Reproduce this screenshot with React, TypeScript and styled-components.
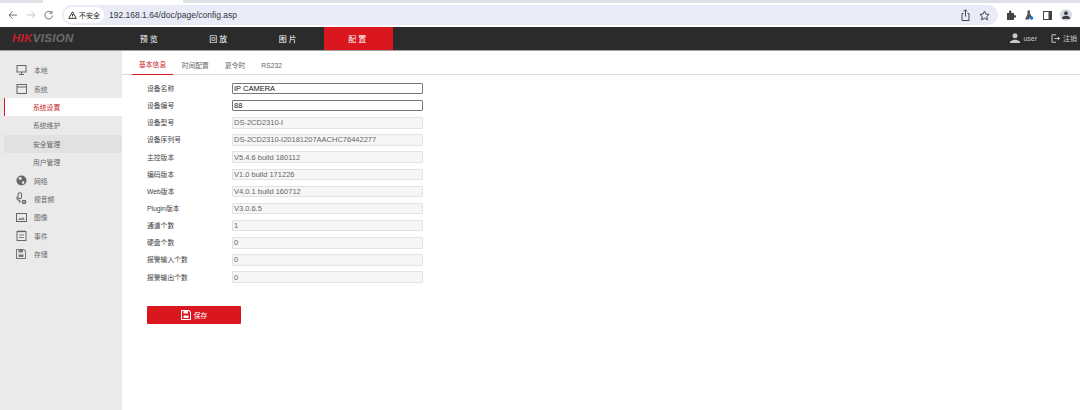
import React from "react";
import styled, { createGlobalStyle } from "styled-components";

const FONT = `"Liberation Sans", "Noto Sans CJK SC", sans-serif`;

const GlobalStyle = createGlobalStyle`
  html, body {
    margin: 0;
    padding: 0;
    background: #ffffff;
    font-family: ${FONT};
  }
  * {
    box-sizing: border-box;
  }
`;

const navItems = ["预览", "回放", "图片", "配置"];
const tabs = ["基本信息", "时间配置", "夏令时", "RS232"];

const fields = [
  { label: "设备名称", value: "IP CAMERA", editable: true },
  { label: "设备编号", value: "88", editable: true },
  { label: "设备型号", value: "DS-2CD2310-I" },
  { label: "设备序列号", value: "DS-2CD2310-I20181207AACHC76442277" },
  { label: "主控版本", value: "V5.4.6 build 180112" },
  { label: "编码版本", value: "V1.0 build 171226" },
  { label: "Web版本", value: "V4.0.1 build 160712" },
  { label: "Plugin版本", value: "V3.0.6.5" },
  { label: "通道个数", value: "1" },
  { label: "硬盘个数", value: "0" },
  { label: "报警输入个数", value: "0" },
  { label: "报警输出个数", value: "0" },
];

const MonitorIcon = () => (
  <svg width="11" height="10" viewBox="0 0 11 10" fill="none" stroke="#666" strokeWidth="1">
    <rect x="1" y="0.5" width="9" height="6.5" />
    <path d="M5.5 7v2M3 9.500h5" />
  </svg>
);
const WindowIcon = () => (
  <svg width="11" height="10" viewBox="0 0 11 10" fill="none" stroke="#666" strokeWidth="1">
    <rect x="1" y="0.5" width="9.500" height="9" />
    <path d="M1 3h9.500" />
  </svg>
);
const GlobeIcon = () => (
  <svg width="11" height="11" viewBox="0 0 11 11">
    <circle cx="5.5" cy="5.5" r="5" fill="#666" />
    <path d="M2.500 2.500l2.500-.5 1 1.500-1.500 1.500-1.500-.5zM6 6l2.500.5-.5 2-1.500 1z" fill="#eaeaea" />
  </svg>
);
const AvIcon = () => (
  <svg width="11" height="13" viewBox="0 0 11 13" fill="none" stroke="#666" strokeWidth="1.1">
    <rect x="2" y="0.8" width="3.5" height="6" rx="1.7" />
    <path d="M0.8 5c0 2.500 1.500 3.500 3 3.500V11" />
    <circle cx="8" cy="10" r="1.600" strokeWidth="1.500" />
  </svg>
);
const ImageIcon = () => (
  <svg width="11" height="9" viewBox="0 0 11 9" fill="none" stroke="#666" strokeWidth="1">
    <rect x="0.5" y="0.5" width="10" height="8" />
    <path d="M2 7l2-2.500 1.200 1.200L7 4l2 3z" fill="#888" stroke="none" />
  </svg>
);
const CalendarIcon = () => (
  <svg width="11" height="11" viewBox="0 0 11 11" fill="none" stroke="#666" strokeWidth="1">
    <rect x="1" y="1.500" width="9" height="9" />
    <path d="M3 0v2.500M5.500 0v2.500M8 0v2.500M3 5h5M3 7.500h5" strokeWidth="0.8" />
  </svg>
);
const DiskIcon = ({ color = "#777" }: { color?: string }) => (
  <svg width="10" height="10" viewBox="0 0 10 10">
    <path
      fillRule="evenodd"
      d="M0 0h8l2 2v8H0zM1 1v8h8V2.400L7.600 1H7v2.500H2.500V1zM2.500 5.500h5V8h-5z"
      fill={color}
    />
  </svg>
);

const sideItems: { label: string; icon?: React.ReactNode; kind?: "active" | "hover" }[] = [
  { label: "本地", icon: <MonitorIcon /> },
  { label: "系统", icon: <WindowIcon /> },
  { label: "系统设置", kind: "active" },
  { label: "系统维护" },
  { label: "安全管理", kind: "hover" },
  { label: "用户管理" },
  { label: "网络", icon: <GlobeIcon /> },
  { label: "视音频", icon: <AvIcon /> },
  { label: "图像", icon: <ImageIcon /> },
  { label: "事件", icon: <CalendarIcon /> },
  { label: "存储", icon: <DiskIcon /> },
];

export default function App() {
  return (
    <>
      <GlobalStyle />
      <Page>
        <TabStrip>
          <StripTab />
        </TabStrip>
        <Toolbar>
          <svg width="46" height="10" viewBox="0 0 46 10" fill="none" stroke="#6b6e73" strokeWidth="1">
            <path d="M9 5H1M4.500 1.500 1 5l3.500 3.500" />
            <path d="M19 5h8M23.500 1.500 27 5l-3.500 3.500" stroke="#c4c6ca" />
            <path d="M44.500 5.500a3.800 3.800 0 1 1-1.100-3M44 .8v2.500h-2.500" />
          </svg>
          <AddressBar>
            <SecurityChip>
              <svg width="9" height="8" viewBox="0 0 9 8" fill="none" stroke="#222" strokeWidth="0.9">
                <path d="M4.500.8.700 7.400h7.600z" />
                <path d="M4.500 3v2.200M4.500 5.700v.7" />
              </svg>
              不安全
            </SecurityChip>
            <Url>192.168.1.64/doc/page/config.asp</Url>
            <AddressIcons>
              <svg width="9" height="12" viewBox="0 0 9 12" fill="none" stroke="#444" strokeWidth="1">
                <path d="M2.500 4.500H1v7h7v-7H6.500M4.500 7.500V.8M2.800 2.500 4.500.8l1.700 1.700" />
              </svg>
              <svg width="11" height="11" viewBox="0 0 11 11" fill="none" stroke="#444" strokeWidth="1">
                <path d="M5.500 1 6.900 4l3.200.4-2.300 2.200.6 3.200-2.900-1.600-2.900 1.600.6-3.200L.9 4.400 4.100 4z" />
              </svg>
            </AddressIcons>
          </AddressBar>
          <ToolbarIcons>
            <svg width="10" height="10" viewBox="0 0 10 10">
              <path d="M1 3h2V1.800a1.200 1.200 0 0 1 2.400 0V3h2.600v2.200h1a1.200 1.200 0 0 1 0 2.400H8V10H1z" fill="#444" />
            </svg>
            <svg width="10" height="10" viewBox="0 0 10 10">
              <path d="M3.500.5h2.500v3l2 3.500H6l-1 2.500H1L3.500 4z" fill="#555" />
              <circle cx="7.500" cy="8" r="1.800" fill="#1a73e8" />
            </svg>
            <svg width="9" height="9" viewBox="0 0 9 9">
              <path fillRule="evenodd" d="M0 0h9v9H0zM1 1v7h4.500V1z" fill="#444" />
            </svg>
            <Avatar>
              <svg width="8" height="8" viewBox="0 0 8 8">
                <circle cx="4" cy="2.200" r="1.900" fill="#3c4043" />
                <path d="M0 8c0-2.500 1.500-3.200 4-3.200S8 5.500 8 8z" fill="#3c4043" />
              </svg>
            </Avatar>
          </ToolbarIcons>
        </Toolbar>
        <Header>
          <Logo>
            <LogoRed>HIK</LogoRed>VISION
          </Logo>
          <Nav>
            {navItems.map((item, i) => (
              <NavItem key={item} $active={i === 3}>
                {item}
              </NavItem>
            ))}
          </Nav>
          <UserArea>
            <svg width="10" height="10" viewBox="0 0 10 10">
              <circle cx="5" cy="2.800" r="2.500" fill="#c8c8c8" />
              <path d="M0 10V8.600l3.500-1.800h3L10 8.600V10z" fill="#c8c8c8" />
            </svg>
            <UserName>user</UserName>
            <svg width="9" height="9" viewBox="0 0 9 9" fill="none" stroke="#c8c8c8" strokeWidth="1">
              <path d="M5 .8H1v7.400h4M3.500 4.500h5M6.800 3l1.700 1.500L6.800 6" />
            </svg>
            <Logout>注销</Logout>
          </UserArea>
        </Header>
        <Body>
          <Sidebar>
            {sideItems.map((item) =>
              item.icon ? (
                <SideRow key={item.label}>
                  <SideIcon>{item.icon}</SideIcon>
                  {item.label}
                </SideRow>
              ) : (
                <SubRow key={item.label} $kind={item.kind}>
                  {item.label}
                </SubRow>
              )
            )}
          </Sidebar>
          <Main>
            <Tabs>
              {tabs.map((tab, i) => (
                <Tab key={tab} $active={i === 0}>
                  {tab}
                </Tab>
              ))}
            </Tabs>
            <Form>
              {fields.map((field) => (
                <Row key={field.label}>
                  <Label>{field.label}</Label>
                  <Value $editable={field.editable}>{field.value}</Value>
                </Row>
              ))}
            </Form>
            <SaveButton>
              <DiskIcon color="#ffffff" />
              保存
            </SaveButton>
          </Main>
        </Body>
      </Page>
    </>
  );
}

const Page = styled.div`
  width: 1080px;
  height: 410px;
  display: flex;
  flex-direction: column;
  overflow: hidden;
`;

const TabStrip = styled.div`
  height: 3px;
  background: #dee1e6;
`;

const StripTab = styled.div`
  width: 140px;
  height: 3px;
  margin-left: 43px;
  background: #ffffff;
`;

const Toolbar = styled.div`
  height: 24px;
  display: flex;
  align-items: center;
  padding: 0 8px 0 8px;
  background: #ffffff;
`;

const AddressBar = styled.div`
  width: 936px;
  height: 20px;
  margin-left: 8px;
  display: flex;
  align-items: center;
  padding: 0 8px 0 2px;
  border-radius: 10px;
  background: #e9ecf6;
`;

const SecurityChip = styled.div`
  height: 16px;
  display: flex;
  align-items: center;
  gap: 2px;
  padding: 0 4px;
  border-radius: 8px;
  background: #ffffff;
  font-size: 7px;
  color: #222222;
`;

const Url = styled.span`
  margin-left: 5px;
  font-size: 8.500px;
  color: #33363b;
`;

const AddressIcons = styled.div`
  margin-left: auto;
  display: flex;
  align-items: center;
  gap: 9px;
`;

const ToolbarIcons = styled.div`
  margin-left: 8px;
  display: flex;
  align-items: center;
  gap: 8.500px;
`;

const Avatar = styled.div`
  width: 12px;
  height: 12px;
  display: flex;
  align-items: center;
  justify-content: center;
  border-radius: 50%;
  background: #d5d9e3;
`;

const Header = styled.div`
  height: 23.500px;
  display: flex;
  align-items: stretch;
  background: #2b2b2b;
  border-bottom: 1px solid #a0a0a0;
`;

const Logo = styled.div`
  width: 115px;
  padding-left: 12px;
  display: flex;
  align-items: center;
  font-size: 11.500px;
  font-weight: 700;
  font-style: italic;
  letter-spacing: 0.300px;
  color: #6d6d6d;
`;

const LogoRed = styled.span`
  color: #c8202a;
`;

const Nav = styled.div`
  display: flex;
`;

const NavItem = styled.div<{ $active?: boolean }>`
  width: 69.500px;
  display: flex;
  align-items: center;
  justify-content: center;
  letter-spacing: 2px;
  font-size: 8px;
  color: #ffffff;
  background: ${(p) => (p.$active ? "#da171f" : "transparent")};
`;

const UserArea = styled.div`
  margin-left: auto;
  padding-right: 3px;
  display: flex;
  align-items: center;
  color: #c8c8c8;
  font-size: 7px;
`;

const UserName = styled.span`
  margin: 0 14px 0 3px;
`;

const Logout = styled.span`
  margin-left: 3px;
`;

const Body = styled.div`
  flex: 1;
  display: flex;
  min-height: 0;
`;

const Sidebar = styled.div`
  width: 122px;
  padding: 10.500px 0 0 4px;
  background: #eaeaea;
`;

const SideRow = styled.div`
  height: 18.400px;
  display: flex;
  align-items: center;
  padding-left: 12px;
  font-size: 6.800px;
  color: #666666;
`;

const SideIcon = styled.span`
  width: 18px;
  display: flex;
  align-items: center;
`;

const SubRow = styled.div<{ $kind?: "active" | "hover" }>`
  height: 18.400px;
  display: flex;
  align-items: center;
  font-size: 6.800px;
  color: ${(p) => (p.$kind === "active" ? "#c8202a" : "#666666")};
  background: ${(p) =>
    p.$kind === "active" ? "#ffffff" : p.$kind === "hover" ? "#e1e1e1" : "transparent"};
  border-left: ${(p) => (p.$kind === "active" ? "1px solid #da171f" : "none")};
  padding-left: ${(p) => (p.$kind === "active" ? "28px" : "29px")};
`;

const Main = styled.div`
  flex: 1;
  padding-top: 4px;
`;

const Tabs = styled.div`
  height: 20px;
  display: flex;
  gap: 1px;
  padding-left: 10px;
  border-bottom: 1px solid #dddddd;
`;

const Tab = styled.div<{ $active?: boolean }>`
  height: 20px;
  display: flex;
  align-items: center;
  padding: ${(p) => (p.$active ? "0 7px" : "1px 7.500px 0")};
  font-size: 6.800px;
  color: ${(p) => (p.$active ? "#c8202a" : "#666666")};
  border-bottom: ${(p) => (p.$active ? "1px solid #da171f" : "none")};
`;

const Form = styled.div`
  margin-top: 5.500px;
  padding-left: 25px;
  display: flex;
  flex-direction: column;
`;

const Row = styled.div`
  height: 17.150px;
  display: flex;
  align-items: center;
`;

const Label = styled.div`
  width: 85px;
  margin-top: -1px;
  font-size: 6.800px;
  color: #444444;
`;

const Value = styled.div<{ $editable?: boolean }>`
  width: 191px;
  height: 11.500px;
  display: flex;
  align-items: center;
  padding-left: 1px;
  border-radius: 1px;
  font-size: 7.500px;
  color: ${(p) => (p.$editable ? "#111111" : "#666666")};
  background: ${(p) => (p.$editable ? "#ffffff" : "#f6f6f6")};
  border: 1px solid ${(p) => (p.$editable ? "#777777" : "#e2e2e2")};
`;

const SaveButton = styled.div`
  width: 94px;
  height: 18px;
  margin: 20px 0 0 25px;
  display: flex;
  align-items: center;
  justify-content: center;
  gap: 3px;
  border-radius: 1px;
  background: #da171f;
  color: #ffffff;
  font-size: 6.800px;
`;
